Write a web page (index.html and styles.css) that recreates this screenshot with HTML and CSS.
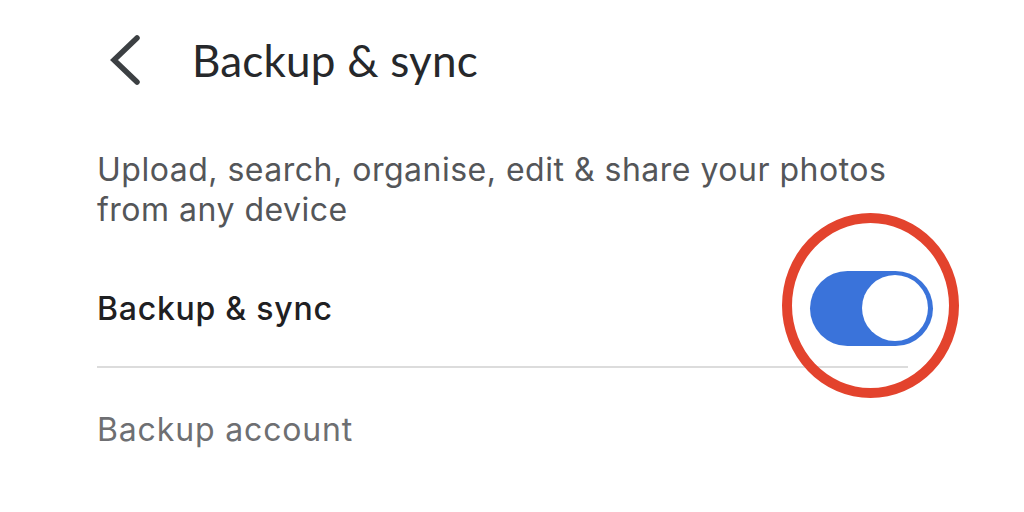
FILE: index.html
```html
<!DOCTYPE html>
<html lang="en">
<head>
<meta charset="utf-8">
<link rel="stylesheet" href="styles.css">
</head>
<body>
<div class="page">
  <header class="topbar">
    <span class="back">
      <svg width="40" height="50" viewBox="0 0 40 50"><polyline points="31,3 8,25 31,47" fill="none" stroke="#3c4043" stroke-width="5.5" stroke-linecap="round" stroke-linejoin="miter"/></svg>
    </span>
    <h1 class="title">Backup &amp; sync</h1>
  </header>
  <main class="content">
    <p class="desc">Upload, search, organise, edit &amp; share your photos<br>from any device</p>
    <div class="row">
      <span class="label">Backup &amp; sync</span>
      <span class="toggle-wrap">
        <span class="toggle"><span class="thumb"></span></span>
        <span class="ring"></span>
      </span>
    </div>
    <div class="divider"></div>
    <div class="account">Backup account</div>
  </main>
</div>
</body>
</html>
```
FILE: styles.css
```css
html, body {
  margin: 0;
  padding: 0;
  background: #ffffff;
}
.page {
  width: 1024px;
  height: 512px;
  overflow: hidden;
  font-family: "Inter", "Liberation Sans", sans-serif;
}
.topbar {
  display: flex;
  align-items: center;
  height: 120px;
  padding-left: 106px;
}
.back {
  display: flex;
  width: 40px;
  height: 50px;
  margin-right: 46px;
}
.title {
  margin: 0;
  font-family: "Lato", "Open Sans", sans-serif;
  font-weight: 400;
  font-size: 44px;
  color: #26282b;
  letter-spacing: 0.2px;
}
.content {
  padding-left: 97px;
  width: 836px;
}
.desc {
  margin: 30px 0 0 0;
  font-size: 32px;
  line-height: 40px;
  letter-spacing: 0.5px;
  color: #545659;
}
.row {
  display: flex;
  align-items: center;
  justify-content: space-between;
  height: 96px;
  margin-top: 30px;
}
.label {
  font-size: 32px;
  letter-spacing: 0.75px;
  color: #1f2022;
  font-weight: 500;
}
.toggle-wrap {
  position: relative;
  display: flex;
}
.toggle {
  display: flex;
  align-items: center;
  justify-content: flex-end;
  width: 123px;
  height: 75px;
  border-radius: 38px;
  background: #3a73da;
  box-sizing: border-box;
  padding-right: 5px;
}
.thumb {
  width: 66px;
  height: 66px;
  border-radius: 50%;
  background: #ffffff;
}
.ring {
  position: absolute;
  left: -28px;
  top: -58px;
  width: 177px;
  height: 185px;
  border: 10px solid #e3432d;
  border-radius: 50%;
  box-sizing: border-box;
}
.divider {
  width: 811px;
  height: 2px;
  background: #dcdcdc;
  margin-top: 10px;
}
.account {
  margin-top: 42px;
  font-size: 32px;
  letter-spacing: 0.85px;
  color: #6e6f72;
}
```
